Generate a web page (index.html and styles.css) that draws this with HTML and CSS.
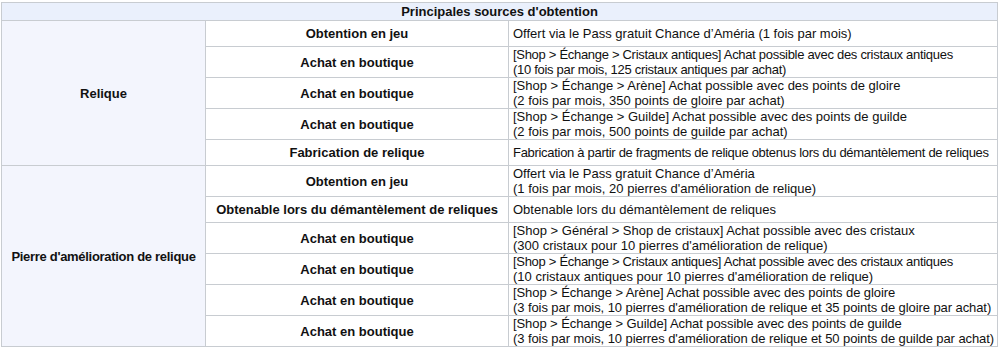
FILE: index.html
```html
<!DOCTYPE html>
<html lang="fr">
<head>
<meta charset="utf-8">
<title>Principales sources d'obtention</title>
<link rel="stylesheet" href="styles.css">
</head>
<body>
<table class="sources">
  <colgroup>
    <col class="c-item">
    <col class="c-type">
    <col class="c-desc">
  </colgroup>
  <thead>
    <tr><th colspan="3" class="title">Principales sources d'obtention</th></tr>
  </thead>
  <tbody>
    <tr>
      <th rowspan="5" class="item">Relique</th>
      <td class="type">Obtention en jeu</td>
      <td class="desc">Offert via le Pass gratuit Chance d’Améria (1 fois par mois)</td>
    </tr>
    <tr>
      <td class="type">Achat en boutique</td>
      <td class="desc"><span class="tight">[Shop &gt; Échange &gt; Cristaux antiques] Achat possible avec des cristaux antiques</span><br><span class="tight">(10 fois par mois, 125 cristaux antiques par achat)</span></td>
    </tr>
    <tr>
      <td class="type">Achat en boutique</td>
      <td class="desc">[Shop &gt; Échange &gt; Arène] Achat possible avec des points de gloire<br>(2 fois par mois, 350 points de gloire par achat)</td>
    </tr>
    <tr>
      <td class="type">Achat en boutique</td>
      <td class="desc">[Shop &gt; Échange &gt; Guilde] Achat possible avec des points de guilde<br>(2 fois par mois, 500 points de guilde par achat)</td>
    </tr>
    <tr>
      <td class="type">Fabrication de relique</td>
      <td class="desc"><span class="tight">Fabrication à partir de fragments de relique obtenus lors du démantèlement de reliques</span></td>
    </tr>
    <tr>
      <th rowspan="6" class="item"><span class="tight">Pierre d'amélioration de relique</span></th>
      <td class="type">Obtention en jeu</td>
      <td class="desc">Offert via le Pass gratuit Chance d’Améria<br>(1 fois par mois, 20 pierres d'amélioration de relique)</td>
    </tr>
    <tr>
      <td class="type">Obtenable lors du démantèlement de reliques</td>
      <td class="desc">Obtenable lors du démantèlement de reliques</td>
    </tr>
    <tr>
      <td class="type">Achat en boutique</td>
      <td class="desc">[Shop &gt; Général &gt; Shop de cristaux] Achat possible avec des cristaux<br>(300 cristaux pour 10 pierres d'amélioration de relique)</td>
    </tr>
    <tr>
      <td class="type">Achat en boutique</td>
      <td class="desc"><span class="tight">[Shop &gt; Échange &gt; Cristaux antiques] Achat possible avec des cristaux antiques</span><br>(10 cristaux antiques pour 10 pierres d'amélioration de relique)</td>
    </tr>
    <tr>
      <td class="type">Achat en boutique</td>
      <td class="desc snug">[Shop &gt; Échange &gt; Arène] Achat possible avec des points de gloire<br>(3 fois par mois, 10 pierres d'amélioration de relique et 35 points de gloire par achat)</td>
    </tr>
    <tr>
      <td class="type">Achat en boutique</td>
      <td class="desc snug">[Shop &gt; Échange &gt; Guilde] Achat possible avec des points de guilde<br>(3 fois par mois, 10 pierres d'amélioration de relique et 50 points de guilde par achat)</td>
    </tr>
  </tbody>
</table>
</body>
</html>
```
FILE: styles.css
```css
html, body {
  margin: 0;
  padding: 0;
  background: #ffffff;
}

body {
  padding: 2px 0 0 1px;
  font-family: "Liberation Sans", Arial, sans-serif;
  font-size: 13px;
  line-height: 15px;
  color: #111111;
}

.sources {
  width: 996px;
  border-collapse: collapse;
  table-layout: fixed;
  border: 1px solid #a2a9b1;
}

.c-item { width: 204px; }
.c-type { width: 303px; }
.c-desc { width: 489px; }

.sources th,
.sources td {
  border: 1px solid #c8ccd1;
}

.title {
  background: #eaf0fc;
  font-weight: bold;
  text-align: center;
  padding: 1px 4px;
  border-bottom: 1px solid #a2a9b1;
}

.item {
  background: #f3f5fd;
  font-weight: bold;
  text-align: center;
  vertical-align: middle;
  padding: 0 4px;
  border-right: 1px solid #a2a9b1;
  border-bottom: 1px solid #a2a9b1;
}

.type {
  font-weight: bold;
  text-align: center;
  vertical-align: middle;
  padding: 5px 4px;
  white-space: nowrap;
}

.desc {
  text-align: left;
  vertical-align: middle;
  padding: 0 3px 0 4px;
  border-left: 1px solid #a2a9b1;
  white-space: nowrap;
  overflow: hidden;
}

.tight {
  letter-spacing: -0.3px;
}

.snug {
  letter-spacing: -0.08px;
}
```
